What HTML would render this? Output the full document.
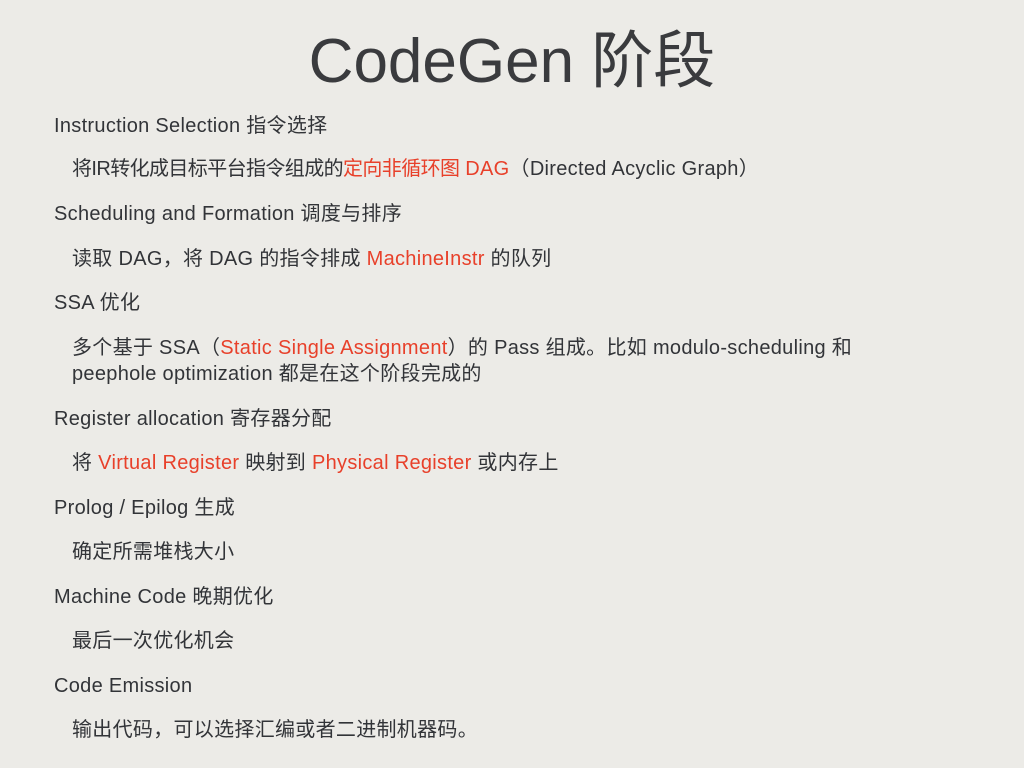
<!DOCTYPE html>
<html><head><meta charset="utf-8"><style>
body{margin:0;width:1024px;height:768px;background:#ecebe7;overflow:hidden;position:relative;font-family:"Liberation Sans","Noto Sans CJK SC",sans-serif;color:#323438}
h1{position:absolute;top:24px;left:0;width:1024px;text-align:center;margin:0;font-weight:normal;font-size:62px;line-height:76px;color:#3a3b3e}
.l{position:absolute;white-space:nowrap;font-size:20px;line-height:24px;letter-spacing:0.3px}
.a{left:54px}.b{left:72px}
.r{color:#e8402a}
.c{letter-spacing:-0.6px}
</style></head><body>
<h1>CodeGen 阶段</h1>
<div class="l a" style="top:114px">Instruction Selection 指令选择</div>
<div class="l b" style="top:157px"><span class="c">将IR转化成目标平台指令组成的</span><span class="r"><span class="c">定向非循环图</span> DAG</span>（Directed Acyclic Graph）</div>
<div class="l a" style="top:202px">Scheduling and Formation 调度与排序</div>
<div class="l b" style="top:247px">读取 DAG，将 DAG 的指令排成 <span class="r">MachineInstr</span> 的队列</div>
<div class="l a" style="top:291px">SSA 优化</div>
<div class="l b" style="top:336px">多个基于 SSA（<span class="r">Static Single Assignment</span>）的 Pass 组成。比如 modulo-scheduling 和</div>
<div class="l b" style="top:362px">peephole optimization 都是在这个阶段完成的</div>
<div class="l a" style="top:407px">Register allocation 寄存器分配</div>
<div class="l b" style="top:451px">将 <span class="r">Virtual Register</span> 映射到 <span class="r">Physical Register</span> 或内存上</div>
<div class="l a" style="top:496px">Prolog / Epilog 生成</div>
<div class="l b" style="top:540px">确定所需堆栈大小</div>
<div class="l a" style="top:585px">Machine Code 晚期优化</div>
<div class="l b" style="top:629px">最后一次优化机会</div>
<div class="l a" style="top:674px">Code Emission</div>
<div class="l b" style="top:718px">输出代码，可以选择汇编或者二进制机器码。</div>
</body></html>
